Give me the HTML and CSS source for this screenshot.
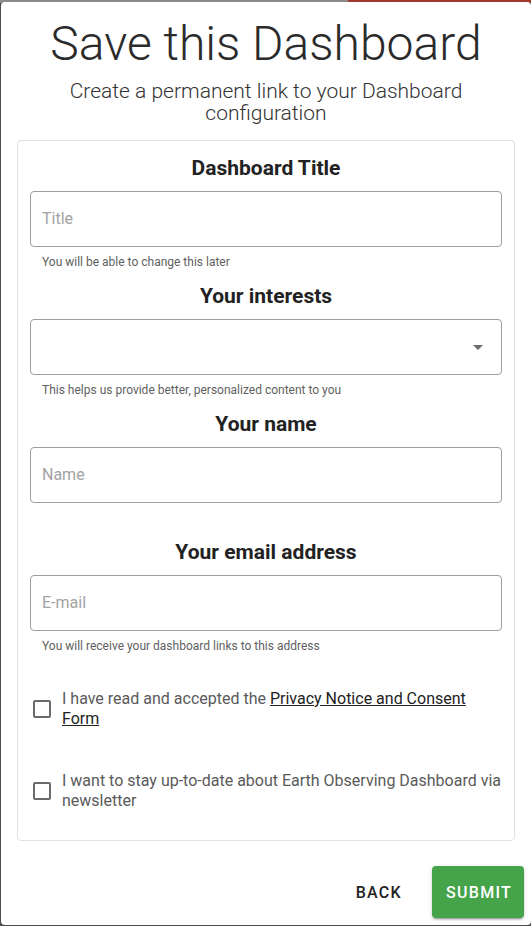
FILE: index.html
```html
<!DOCTYPE html>
<html lang="en">
<head>
<meta charset="utf-8">
<title>Save this Dashboard</title>
<link rel="stylesheet" href="styles.css">
</head>
<body>
<div class="dialog">
  <div class="content">
    <h1 class="title">Save this Dashboard</h1>
    <p class="subtitle">Create a permanent link to your Dashboard configuration</p>
    <form class="card">
      <div class="section">
        <h2 class="label">Dashboard Title</h2>
        <div class="field"><span class="placeholder">Title</span></div>
        <p class="helper">You will be able to change this later</p>
      </div>
      <div class="section">
        <h2 class="label">Your interests</h2>
        <div class="field select">
          <svg class="arrow" width="24" height="24" viewBox="0 0 24 24"><path d="M7 10l5 5 5-5z" fill="#6b6b6b"/></svg>
        </div>
        <p class="helper">This helps us provide better, personalized content to you</p>
      </div>
      <div class="section">
        <h2 class="label">Your name</h2>
        <div class="field"><span class="placeholder">Name</span></div>
        <p class="helper"></p>
      </div>
      <div class="section">
        <h2 class="label">Your email address</h2>
        <div class="field"><span class="placeholder">E-mail</span></div>
        <p class="helper">You will receive your dashboard links to this address</p>
      </div>
      <label class="check first">
        <span class="box"></span>
        <span class="check-text">I have read and accepted the <a class="link" href="#">Privacy Notice and Consent Form</a></span>
      </label>
      <label class="check second">
        <span class="box"></span>
        <span class="check-text">I want to stay up-to-date about Earth Observing Dashboard via newsletter</span>
      </label>
    </form>
  </div>
  <div class="actions">
    <button class="btn back" type="button">Back</button>
    <button class="btn submit" type="button">Submit</button>
  </div>
</div>
</body>
</html>
```

FILE: styles.css
```css
* { box-sizing: border-box; }
html, body { margin: 0; padding: 0; }
body {
  font-family: Roboto, "Liberation Sans", sans-serif;
  background: linear-gradient(to right, #8c8c8c 348px, #a2382f 348px) top left / 100% 3px no-repeat, #4d4d4d;
  height: 926px;
  overflow: hidden;
}
.dialog {
  margin: 2px 0 0 1px;
  background: #fff;
  border-radius: 4px;
  height: 923px;
  padding-top: 12px;
  display: flex;
  flex-direction: column;
}
.content {
  padding: 0 16px;
}
.title {
  margin: 0;
  font-weight: 300;
  font-size: 48px;
  line-height: 60px;
  text-align: center;
  color: #2b2b2b;
}
.subtitle {
  margin: 6px 0 0 0;
  font-weight: 300;
  font-size: 21px;
  line-height: 22px;
  text-align: center;
  color: #333;
  padding: 0 40px;
}
.card {
  margin: 16px 0 0 0;
  border: 1px solid #e0e0e0;
  border-radius: 4px;
  padding: 15px 12px 29px 12px;
  display: flex;
  flex-direction: column;
}
.section {
  display: flex;
  flex-direction: column;
}
.section + .section { margin-top: 12px; }
.label {
  margin: 0 0 11px 0;
  font-size: 21px;
  line-height: 24px;
  font-weight: 700;
  text-align: center;
  color: #222;
}
.field {
  height: 56px;
  border: 1px solid #9e9e9e;
  border-radius: 4px;
  padding: 0 11px;
  display: flex;
  align-items: center;
}
.placeholder {
  font-size: 16px;
  color: #a3a3a3;
  margin-top: -2px;
}
.select { justify-content: flex-end; }
.arrow { display: block; }
.helper {
  margin: 5px 0 0 0;
  padding: 0 12px;
  height: 20px;
  font-size: 12px;
  line-height: 20px;
  color: #5f5f5f;
}
.check {
  display: flex;
  align-items: center;
  gap: 11px;
  padding-left: 3px;
  font-size: 16px;
  line-height: 20px;
  color: #5a5a5a;
}
.check.first { margin-top: 33px; }
.check.second { margin-top: 42px; }
.box {
  flex: none;
  width: 18px;
  height: 18px;
  border: 2px solid #6b6b6b;
  border-radius: 2px;
}
.check-text { display: block; }
.link { color: #222; text-decoration: underline; }
.actions {
  display: flex;
  justify-content: flex-end;
  gap: 17px;
  margin-top: 25px;
  padding-right: 7px;
}
.btn {
  height: 52px;
  border: none;
  border-radius: 4px;
  font-family: Roboto, "Liberation Sans", sans-serif;
  font-size: 16px;
  font-weight: 500;
  letter-spacing: 1.3px;
  text-transform: uppercase;
  padding: 0 13px 0 14px;
  background: transparent;
}
.back { color: #222; }
.submit {
  width: 92px;
  background: #45a34a;
  color: #fff;
  box-shadow: 0 3px 1px -2px rgba(0,0,0,0.2), 0 2px 2px 0 rgba(0,0,0,0.14), 0 1px 5px 0 rgba(0,0,0,0.12);
}
```
